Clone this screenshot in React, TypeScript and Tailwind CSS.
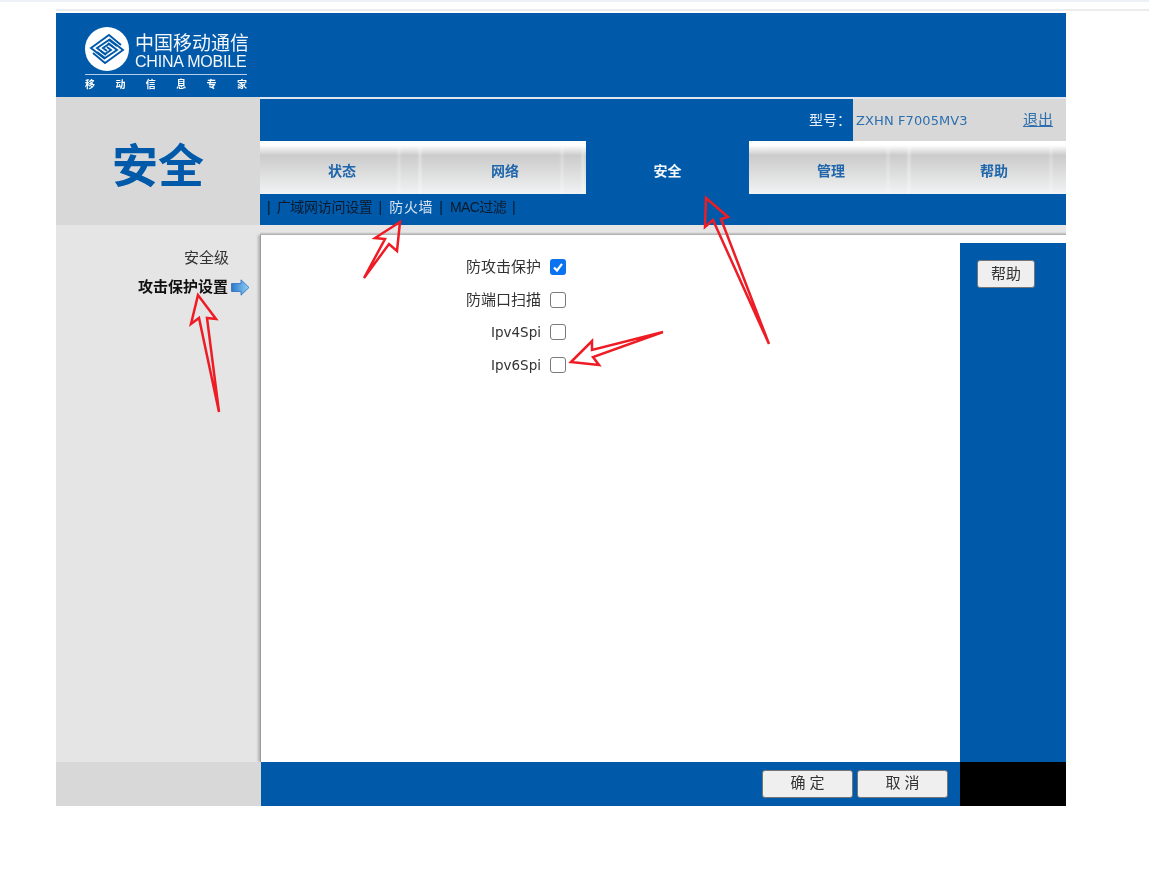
import React from "react";

const cjk = "font-['Liberation_Sans','Noto_Sans_CJK_SC',sans-serif]";
const dejavu = "font-['DejaVu_Sans','Noto_Sans_CJK_SC',sans-serif]";

function Logo() {
  return (
    <svg width="44" height="44" viewBox="0 0 44 44" className="shrink-0">
      <circle cx="22" cy="22" r="22" fill="#fff" />
      <g fill="none" stroke="#0059a9" strokeWidth="1.9" strokeLinejoin="miter">
        <path d="M36 18 L24 8 L6 21 L20 32" />
        <path d="M32 19 L24 13 L12 21 L21 28" />
        <path d="M28 20 L24 17 L18 21 L22 24" />
        <path d="M8 26 L20 36 L38 23 L24 12" />
        <path d="M12 25 L20 31 L32 23 L23 16" />
        <path d="M16 24 L20 27 L26 23 L22 20" />
      </g>
    </svg>
  );
}

function Tab({ label, active, w = 163 }: { label: string; active?: boolean; w?: number }) {
  if (active) {
    return (
      <div className="w-[163px] h-[53px] flex items-center justify-center pt-[8px] bg-[#0059a9] text-[#f4f7fb] text-[14px] font-bold">
        {label}
      </div>
    );
  }
  return (
    <div
      className="h-[53px] flex shrink-0 overflow-hidden bg-gradient-to-b from-[#ffffff] from-[8%] via-[#cbcbcb] via-[27%] to-[#f2f3f4]"
      style={{ width: w }}
    >
      <div className="w-[136px] shrink-0 flex items-center justify-center pl-[28px] pt-[8px] text-[#1f66ab] text-[14px] font-bold">
        {label}
      </div>
      <div className="w-[6px] shrink-0 bg-gradient-to-r from-white/0 via-white/25 to-white/0" />
      <div className="w-[15px] shrink-0" />
      <div className="w-[6px] shrink-0 bg-gradient-to-r from-white/0 via-white/35 to-white/0" />
    </div>
  );
}

function CheckRow({ label, checked, latin }: { label: string; checked?: boolean; latin?: boolean }) {
  return (
    <div className="h-[32.5px] flex items-center">
      <div className={`w-[289px] text-right text-[#333] pr-[9px] ${latin ? `${dejavu} text-[13.5px]` : "text-[15px]"}`}>
        {label}
      </div>
      {checked ? (
        <div className="w-4 h-4 rounded-[3px] bg-[#0b72f0] flex items-center justify-center">
          <svg width="12" height="12" viewBox="0 0 12 12">
            <path d="M2 6.5 L5 9.5 L10 2.8" fill="none" stroke="#fff" strokeWidth="2.2" />
          </svg>
        </div>
      ) : (
        <div className="w-4 h-4 rounded-[3px] border-[1.5px] border-[#7a7a7a] bg-white" />
      )}
    </div>
  );
}

function Btn({ label, w }: { label: string; w: string }) {
  return (
    <button
      className={`${w} h-[28px] rounded-[3px] border border-[#767676] bg-[#efefef] text-[#333] text-[15px] flex items-center justify-center`}
    >
      {label}
    </button>
  );
}

function Arrows() {
  const p = "fill-none stroke-[#ee1c25] stroke-[2.5]";
  return (
    <svg width="1149" height="891" className="absolute left-0 top-0 pointer-events-none">
      <polygon className={p} points="198,295 191,324 199,318 219,412 207,318 216,319" />
      <polygon className={p} points="400,222 375,238 385,239 364,278 389,244 397,251" />
      <polygon className={p} points="706,198 728,217 721,219 769,344 713,220 705,227" />
      <polygon className={p} points="571,362 592,341 592,350 663,332 593,357 599,365" />
    </svg>
  );
}

export default function App() {
  return (
    <div className={`relative w-[1149px] h-[891px] bg-white overflow-hidden blur-[0.35px] ${cjk}`}>
      <div className="h-[2px] bg-[#eef1f8]" />
      <div className="h-[7px]" />
      <div className="ml-[56px] h-[2px] bg-[#ececec]" />
      <div className="h-[2px]" />
      <div className="ml-[56px] w-[1010px] flex flex-col">
        {/* top banner */}
        <div className="h-[84px] bg-[#0059a9] pl-[29px] pt-[14px]">
          <div className="w-[162px]">
            <div className="flex items-center gap-[6px] h-[44px]">
              <Logo />
              <div className="flex flex-col text-[#f4f7fb] pt-[4px]">
                <div className="text-[19px] leading-[21px] whitespace-nowrap">中国移动通信</div>
                <div className="text-[16px] leading-[16px] whitespace-nowrap tracking-[-0.2px]">CHINA MOBILE</div>
              </div>
            </div>
            <div className="h-px bg-[#b7cde4] mt-[3px]" />
            <div className="flex justify-between text-white text-[10px] font-bold leading-[16px] mt-[2px]">
              <span>移</span>
              <span>动</span>
              <span>信</span>
              <span>息</span>
              <span>专</span>
              <span>家</span>
            </div>
          </div>
        </div>

        {/* title + tabs */}
        <div className="h-[128px] flex">
          <div className="w-[204px] bg-[#d8d8d8] flex items-center justify-center pt-[10px]">
            <span className="text-[#0059a9] text-[46px] font-bold leading-none">安全</span>
          </div>
          <div className="w-[806px] flex flex-col overflow-hidden">
            <div className="h-[2px] bg-[#dfe6ee]" />
            <div className="h-[42px] flex">
              <div className="w-[593px] bg-[#0059a9] flex items-center justify-end pr-[2px] pt-[1px] text-[#e4edf6] text-[14px]">
                型号：
              </div>
              <div className="flex-1 bg-[#d8d8d8] flex items-center justify-between pl-[3px] pr-[13px] pt-[1px] text-[#2d6fae] text-[14px]">
                <span className={`${dejavu} text-[13px] tracking-[0.1px]`}>ZXHN F7005MV3</span>
                <a className="underline text-[15px]">退出</a>
              </div>
            </div>
            <div className="flex h-[53px]">
              <Tab label="状态" />
              <Tab label="网络" />
              <Tab label="安全" active />
              <Tab label="管理" />
              <Tab label="帮助" w={154} />
            </div>
            <div className="h-[31px] bg-[#0059a9] flex items-center pl-[7px] pb-[5px] text-[14px] text-[#0b1a2b] whitespace-nowrap">
              <span>|</span>
              <span className="ml-[6px] tracking-[-0.3px]">广域网访问设置</span>
              <span className="ml-[6px]">|</span>
              <span className="ml-[7px] text-[#d5e3f1] tracking-[0.7px]">防火墙</span>
              <span className="ml-[6px]">|</span>
              <span className="ml-[7px] tracking-[-0.6px]">MAC过滤</span>
              <span className="ml-[6px]">|</span>
            </div>
          </div>
        </div>

        {/* main */}
        <div className="h-[537px] flex bg-[#e5e5e5]">
          <div className="w-[204px] pt-[23px] flex flex-col text-[15px] text-[#333]">
            <div className="h-[20px] leading-[20px] text-right pr-[31px]">安全级</div>
            <div className="h-[20px] leading-[20px] mt-[9px] flex justify-end items-center pr-[10px] font-bold text-[#111]">
              <span>攻击保护设置</span>
              <svg width="19" height="17" viewBox="0 0 19 17" className="ml-[3px]">
                <defs>
                  <linearGradient id="arr" x1="0" x2="1" y1="0" y2="0">
                    <stop offset="0" stopColor="#2a78c9" />
                    <stop offset="1" stopColor="#8fd0f7" />
                  </linearGradient>
                </defs>
                <path d="M0.5 4.5 H10 V0.8 L18 8.5 L10 16.2 V12.5 H0.5 Z" fill="url(#arr)" stroke="#2a6fbd" strokeWidth="0.8" />
              </svg>
            </div>
          </div>
          <div className="flex-1 flex flex-col">
            <div className="h-[10px] bg-gradient-to-b from-[#e5e5e5] from-[70%] to-[#a9a9a9]" />
            <div className="flex-1 flex border-l border-[#9b9b9b] shadow-[-2px_0_2px_#b5b5b5]">
              <div className="w-[699px] bg-white pt-[16px] flex flex-col">
                <CheckRow label="防攻击保护" checked />
                <CheckRow label="防端口扫描" />
                <CheckRow label="Ipv4Spi" latin />
                <CheckRow label="Ipv6Spi" latin />
              </div>
              <div className="flex-1 flex flex-col bg-white">
                <div className="h-[8px]" />
                <div className="flex-1 bg-[#0059a9] pt-[17px] pl-[17px]">
                  <Btn label="帮助" w="w-[58px]" />
                </div>
              </div>
            </div>
          </div>
        </div>

        {/* bottom bar */}
        <div className="h-[44px] flex">
          <div className="w-[205px] bg-[#d8d8d8]" />
          <div className="w-[699px] bg-[#0059a9] flex justify-end items-center gap-[4px] pr-[12px] pb-[1px]">
            <Btn label="确 定" w="w-[91px]" />
            <Btn label="取 消" w="w-[91px]" />
          </div>
          <div className="w-[106px] bg-black" />
        </div>
      </div>
      <Arrows />
    </div>
  );
}
